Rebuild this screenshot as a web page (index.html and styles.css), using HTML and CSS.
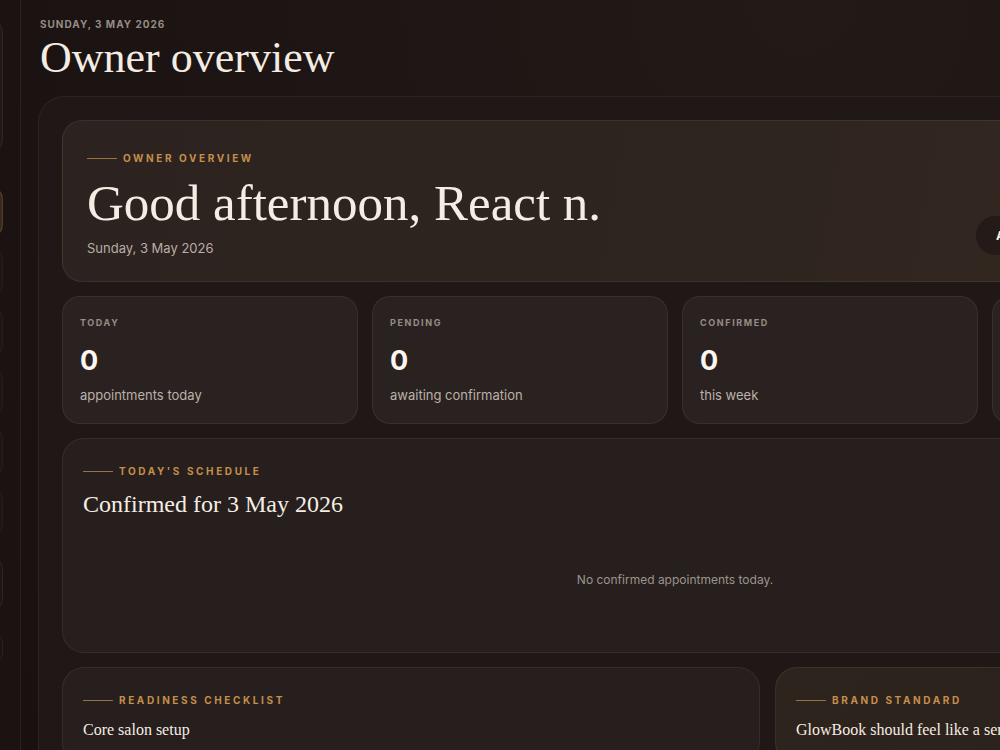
FILE: index.html
```html
<!DOCTYPE html>
<html lang="en">
<head>
  <meta charset="UTF-8" />
  <meta name="viewport" content="width=device-width, initial-scale=1.0"/>
  <title>GlowBook · Owner overview</title>
  <link rel="stylesheet" href="styles.css">
</head>
<body>
  <div class="app">
    <aside class="sidebar">
      <div class="brand-card"></div>
      <nav class="nav">
        <a class="nav-item active"></a>
        <a class="nav-item"></a>
        <a class="nav-item"></a>
        <a class="nav-item"></a>
        <a class="nav-item"></a>
        <a class="nav-item"></a>
      </nav>
      <div class="side-foot">
        <div class="foot-card"></div>
        <div class="foot-btn"></div>
      </div>
    </aside>

    <main class="main">
      <header class="page-head">
        <p class="page-date">Sunday, 3 May 2026</p>
        <h1 class="page-title">Owner overview</h1>
      </header>

      <section class="panel">
        <div class="hero">
          <div class="hero-text">
            <p class="eyebrow">Owner overview</p>
            <h2 class="hero-title">Good afternoon, React n.</h2>
            <p class="hero-date">Sunday, 3 May 2026</p>
          </div>
          <button class="hero-btn" type="button">Add appointment</button>
        </div>

        <div class="stats">
          <div class="stat">
            <p class="stat-label">Today</p>
            <p class="stat-value">0</p>
            <p class="stat-desc">appointments today</p>
          </div>
          <div class="stat">
            <p class="stat-label">Pending</p>
            <p class="stat-value">0</p>
            <p class="stat-desc">awaiting confirmation</p>
          </div>
          <div class="stat">
            <p class="stat-label">Confirmed</p>
            <p class="stat-value">0</p>
            <p class="stat-desc">this week</p>
          </div>
          <div class="stat">
            <p class="stat-label">Clients</p>
            <p class="stat-value">0</p>
            <p class="stat-desc">in your book</p>
          </div>
        </div>

        <div class="card schedule">
          <p class="eyebrow">Today's schedule</p>
          <h3 class="card-title">Confirmed for 3 May 2026</h3>
          <p class="empty">No confirmed appointments today.</p>
        </div>

        <div class="lower">
          <div class="card">
            <p class="eyebrow">Readiness checklist</p>
            <h4 class="small-title">Core salon setup</h4>
          </div>
          <div class="card brand">
            <p class="eyebrow">Brand standard</p>
            <h4 class="small-title">GlowBook should feel like a serious, premium booking tool.</h4>
          </div>
        </div>
      </section>
    </main>
  </div>
</body>
</html>
```

FILE: styles.css
```css
* {
  box-sizing: border-box;
}
html, body {
  margin: 0;
  height: 100%;
  overflow: hidden;
}
body {
  font-family: Inter, 'Noto Sans', sans-serif;
  background: radial-gradient(ellipse at 80% 0%, #231a17 0%, #1b1412 60%, #181110 100%);
  color: #f3ebe2;
}
p, h1, h2, h3, h4 {
  margin: 0;
}
.app {
  display: flex;
  min-height: 100vh;
}

/* sidebar, mostly scrolled out of view */
.sidebar {
  flex: 0 0 261px;
  margin-left: -240px;
  padding: 17px 17px 0 16px;
  border-right: 1px solid rgba(255, 235, 215, 0.07);
  background: #1a1311;
  display: flex;
  flex-direction: column;
}
.brand-card {
  height: 138px;
  border: 1px solid rgba(255, 235, 215, 0.07);
  border-radius: 16px;
  background: #211917;
}
.nav {
  display: flex;
  flex-direction: column;
  gap: 10px;
  margin-top: 32px;
}
.nav-item {
  display: block;
  height: 50px;
  border-radius: 12px;
  border: 1px solid rgba(255, 235, 215, 0.04);
  background: #1e1614;
}
.nav-item.active {
  background: linear-gradient(90deg, #2d2119, #3a2a1e);
  border-color: rgba(200, 145, 74, 0.25);
}
.side-foot {
  margin-top: 20px;
}
.foot-card {
  height: 54px;
  border-radius: 12px;
  border: 1px solid rgba(255, 235, 215, 0.07);
  background: #1e1614;
}
.foot-btn {
  margin-top: 22px;
  height: 30px;
  border-radius: 10px;
  border: 1px solid rgba(255, 235, 215, 0.08);
}

/* main column */
.main {
  flex: 0 0 1291px;
  padding: 18px 0 0 17px;
}
.page-head {
  padding-left: 2px;
}
.page-date {
  font-size: 10px;
  font-weight: 700;
  letter-spacing: 1px;
  text-transform: uppercase;
  color: #968c85;
}
.page-title {
  font-family: 'Liberation Serif', 'DejaVu Serif', serif;
  font-weight: 400;
  font-size: 44px;
  line-height: 1;
  margin-top: 6px;
  color: #f4ece3;
}
.panel {
  margin-top: 16px;
  padding: 23px 23px 24px;
  border: 1px solid rgba(255, 235, 215, 0.06);
  border-radius: 26px;
  background: #201816;
  display: flex;
  flex-direction: column;
  gap: 14px;
}
.eyebrow {
  display: flex;
  align-items: center;
  gap: 6px;
  font-size: 10px;
  font-weight: 700;
  letter-spacing: 2.6px;
  text-transform: uppercase;
  color: #c58f4b;
}
.eyebrow::before {
  content: "";
  width: 30px;
  height: 1px;
  background: #9a7240;
}

/* hero */
.hero {
  display: flex;
  align-items: flex-end;
  justify-content: space-between;
  height: 162px;
  padding: 32px 0 25px 24px;
  border: 1px solid rgba(255, 235, 215, 0.07);
  border-radius: 20px;
  background: linear-gradient(100deg, #2c2320 0%, #2f251f 60%, #372a21 100%);
}
.hero-title {
  font-family: 'Liberation Serif', 'DejaVu Serif', serif;
  font-weight: 400;
  font-size: 51px;
  line-height: 1;
  margin-top: 14px;
  color: #f5ede4;
}
.hero-date {
  margin-top: 11px;
  font-size: 13px;
  color: #b8aea6;
}
.hero-btn {
  width: 150px;
  margin-right: 161px;
  margin-bottom: 1px;
  height: 39px;
  padding: 0 20px;
  border: none;
  border-radius: 20px;
  background: #241a17;
  color: #f7f1ea;
  font-family: inherit;
  font-size: 12px;
  font-weight: 700;
  text-align: left;
}

/* stats */
.stats {
  display: grid;
  grid-template-columns: repeat(4, 1fr);
  gap: 14px;
}
.stat {
  height: 128px;
  padding: 20px 17px;
  border: 1px solid rgba(255, 235, 215, 0.07);
  border-radius: 18px;
  background: #2a2220;
}
.stat-label {
  font-size: 9px;
  font-weight: 700;
  letter-spacing: 1.6px;
  text-transform: uppercase;
  color: #968d86;
}
.stat-value {
  margin-top: 19px;
  font-size: 27px;
  font-weight: 700;
  line-height: 1;
  color: #fbf6f0;
}
.stat-desc {
  margin-top: 13px;
  font-size: 13px;
  color: #bbb1a9;
}

/* cards */
.card {
  padding: 26px 20px 24px;
  border: 1px solid rgba(255, 235, 215, 0.07);
  border-radius: 22px;
  background: #261f1d;
}
.schedule {
  height: 215px;
}
.card-title {
  margin-top: 14px;
  font-family: 'Liberation Serif', 'DejaVu Serif', serif;
  font-weight: 400;
  font-size: 24px;
  color: #f5ede4;
}
.empty {
  margin-top: 54px;
  text-align: center;
  font-size: 12px;
  color: #9d948c;
}
.lower {
  display: grid;
  grid-template-columns: 698px 1fr;
  gap: 15px;
}
.brand {
  background: linear-gradient(120deg, #2e241e 0%, #2a211c 100%);
}
.small-title {
  margin-top: 15px;
  font-family: 'Liberation Serif', 'DejaVu Serif', serif;
  font-weight: 400;
  font-size: 16px;
  white-space: nowrap;
  color: #f5ede4;
}
```
